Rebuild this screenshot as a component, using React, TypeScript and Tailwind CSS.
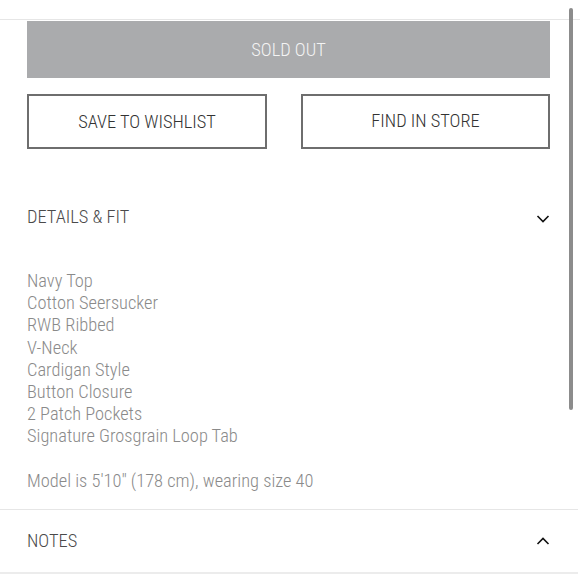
import React from "react";

const font = {
  fontFamily:
    '"Roboto Condensed", "Liberation Sans Narrow", "DejaVu Sans Condensed", "Liberation Sans", sans-serif',
};

function Chevron({ up }: { up?: boolean }) {
  return (
    <svg width="14" height="8" viewBox="0 0 14 8" fill="none">
      <path
        d={up ? "M1.5 7 L7 1.5 L12.5 7" : "M1.5 1 L7 6.5 L12.5 1"}
        stroke="#111"
        strokeWidth="1.6"
      />
    </svg>
  );
}

const items = [
  "Navy Top",
  "Cotton Seersucker",
  "RWB Ribbed",
  "V-Neck",
  "Cardigan Style",
  "Button Closure",
  "2 Patch Pockets",
  "Signature Grosgrain Loop Tab",
];

export default function App() {
  return (
    <div className="relative w-[580px] h-[580px] overflow-hidden bg-white font-light" style={font}>
      <div className="h-[19px]" />
      <div className="h-px bg-[#e6e6e6]" />
      <div className="pl-[27px] pr-[30px]">
        <div className="mt-[1px] h-[57px] bg-[#aaabad] flex items-center justify-center text-[18.4px] text-[#f4f4f4]">
          SOLD OUT
        </div>
        <div className="mt-[16px] flex gap-[34px]">
          <div className="w-[240px] h-[55px] border-2 border-[#6e6e6e] flex items-center justify-center text-[18.4px] text-[#333] pt-[1px]">
            SAVE TO WISHLIST
          </div>
          <div className="flex-1 h-[55px] border-2 border-[#6e6e6e] flex items-center justify-center text-[18.4px] text-[#333] pb-[1px]">
            FIND IN STORE
          </div>
        </div>
        <div className="mt-[48px] h-[40px] flex items-center justify-between">
          <span className="text-[18.4px] text-[#4a4a4a]">DETAILS &amp; FIT</span>
          <span className="mt-[3px]">
            <Chevron />
          </span>
        </div>
        <div className="mt-[33px] text-[18.4px] leading-[22.2px] text-[#8a8a8a]">
          {items.map((t) => (
            <div key={t}>{t}</div>
          ))}
          <div className="h-[22.2px]" />
          <div>Model is 5'10" (178 cm), wearing size 40</div>
        </div>
      </div>
      <div className="mt-[17px] h-px bg-[#e6e6e6] mr-[2px]" />
      <div className="pl-[27px] pr-[30px] h-[62px] flex items-center justify-between">
        <span className="text-[18.4px] text-[#4a4a4a]">NOTES</span>
        <span>
          <Chevron up />
        </span>
      </div>
      <div className="h-[2px] bg-[#ececec] mr-[2px]" />
      <div className="absolute left-[569px] top-[8px] w-[4px] h-[402px] rounded-full bg-[#8c8c8c]" />
    </div>
  );
}
